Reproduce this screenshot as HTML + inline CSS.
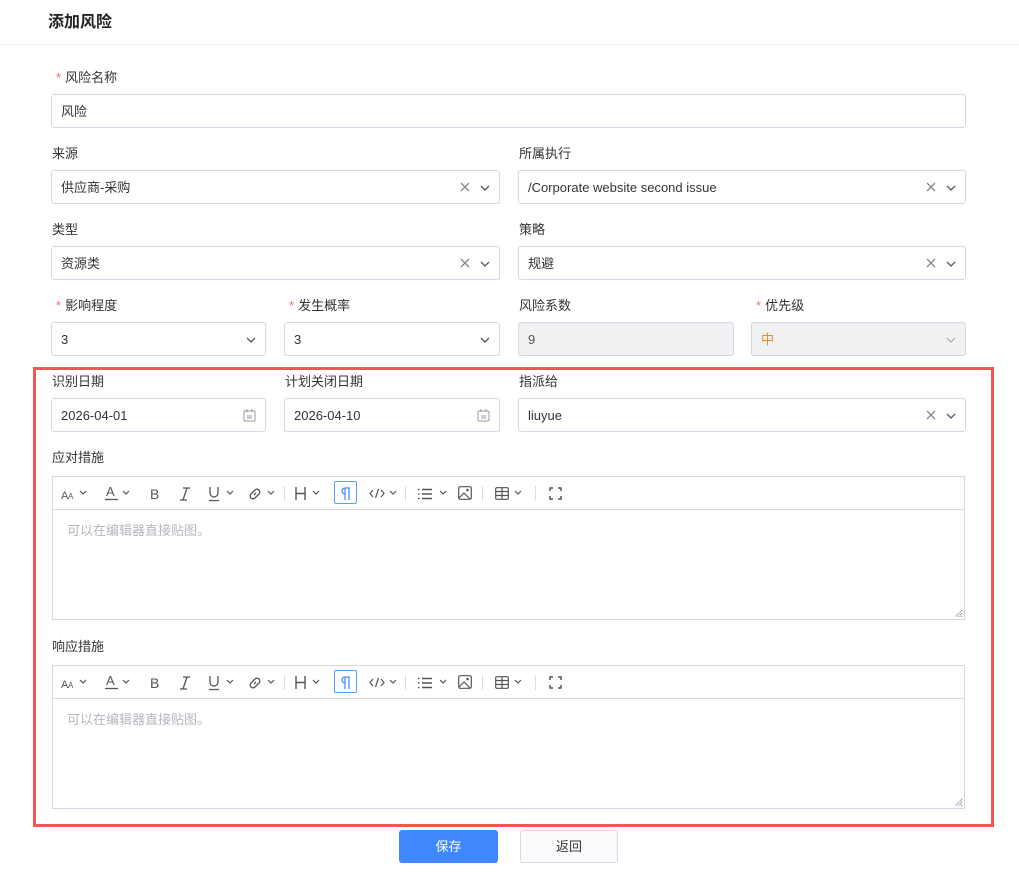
<!DOCTYPE html>
<html><head><meta charset="utf-8"><style>
*{box-sizing:border-box;margin:0;padding:0}
body{width:1019px;height:878px;background:#fff;position:relative;overflow:hidden;font-family:"Liberation Sans","Noto Sans CJK SC",sans-serif;color:#333;font-size:13px}
.a{position:absolute}
.lbl{position:absolute;font-size:13px;color:#333;line-height:16px}
.req{color:#f56c6c;margin-right:4px}
.in{position:absolute;height:34px;border:1px solid #d5d8e4;border-radius:3px;background:#fff;padding-left:9px;line-height:33px;font-size:13px;color:#333}
.dis{background:#f0f1f3}
.x{position:absolute;top:11px}
.chev{position:absolute;top:14px}
.ed{position:absolute;left:52px;width:913px;border:1px solid #d5d8e4;background:#fff}
.tb{height:33px;border-bottom:1px solid #d5d8e4;position:relative}
.tb svg{position:absolute}
.ph{position:absolute;left:14px;top:43px;color:#b4b7bf;font-size:13px}
.rs{position:absolute;right:1px;bottom:1px}
</style></head><body>
<div class="a" style="left:48px;top:8px;font-size:16px;font-weight:bold;color:#222">添加风险</div>
<div class="a" style="left:0;top:44px;width:1019px;height:1px;background:#eceef2"></div>

<div class="lbl" style="left:56px;top:70px"><span class="req">*</span>风险名称</div>
<div class="in" style="left:51px;top:94px;width:915px">风险</div>

<div class="lbl" style="left:52px;top:146px">来源</div>
<div class="in" style="left:51px;top:170px;width:449px">供应商-采购
<svg class="x" style="right:29px" width="10" height="10"><path d="M1 1l8 8M9 1l-8 8" stroke="#888" stroke-width="1.3"/></svg>
<svg class="chev" style="right:9px" width="10" height="6"><path d="M1 1l4 4 4-4" stroke="#555" fill="none" stroke-width="1.3"/></svg></div>
<div class="lbl" style="left:519px;top:146px">所属执行</div>
<div class="in" style="left:518px;top:170px;width:448px">/Corporate website second issue
<svg class="x" style="right:29px" width="10" height="10"><path d="M1 1l8 8M9 1l-8 8" stroke="#888" stroke-width="1.3"/></svg>
<svg class="chev" style="right:9px" width="10" height="6"><path d="M1 1l4 4 4-4" stroke="#555" fill="none" stroke-width="1.3"/></svg></div>

<div class="lbl" style="left:52px;top:222px">类型</div>
<div class="in" style="left:51px;top:246px;width:449px">资源类
<svg class="x" style="right:29px" width="10" height="10"><path d="M1 1l8 8M9 1l-8 8" stroke="#888" stroke-width="1.3"/></svg>
<svg class="chev" style="right:9px" width="10" height="6"><path d="M1 1l4 4 4-4" stroke="#555" fill="none" stroke-width="1.3"/></svg></div>
<div class="lbl" style="left:519px;top:222px">策略</div>
<div class="in" style="left:518px;top:246px;width:448px">规避
<svg class="x" style="right:29px" width="10" height="10"><path d="M1 1l8 8M9 1l-8 8" stroke="#888" stroke-width="1.3"/></svg>
<svg class="chev" style="right:9px" width="10" height="6"><path d="M1 1l4 4 4-4" stroke="#555" fill="none" stroke-width="1.3"/></svg></div>

<div class="lbl" style="left:56px;top:298px"><span class="req">*</span>影响程度</div>
<div class="in" style="left:51px;top:322px;width:215px">3
<svg class="chev" style="right:9px" width="10" height="6"><path d="M1 1l4 4 4-4" stroke="#555" fill="none" stroke-width="1.3"/></svg></div>
<div class="lbl" style="left:289px;top:298px"><span class="req">*</span>发生概率</div>
<div class="in" style="left:284px;top:322px;width:216px">3
<svg class="chev" style="right:9px" width="10" height="6"><path d="M1 1l4 4 4-4" stroke="#555" fill="none" stroke-width="1.3"/></svg></div>
<div class="lbl" style="left:519px;top:298px">风险系数</div>
<div class="in dis" style="left:518px;top:322px;width:216px;color:#555">9</div>
<div class="lbl" style="left:756px;top:298px"><span class="req">*</span>优先级</div>
<div class="in dis" style="left:751px;top:322px;width:215px;color:#f08a24">中
<svg class="chev" style="right:9px" width="10" height="6"><path d="M1 1l4 4 4-4" stroke="#aaa" fill="none" stroke-width="1.2"/></svg></div>

<div class="a" style="left:33px;top:367px;width:961px;height:460px;border:3px solid #f55454"></div>

<div class="lbl" style="left:52px;top:374px">识别日期</div>
<div class="in" style="left:51px;top:398px;width:215px">2026-04-01
<svg class="a" style="right:9px;top:10px" width="13" height="13"><rect x="1" y="2" width="11" height="10" rx="1" fill="none" stroke="#999"/><path d="M4 0v3M9 0v3M4 7h5M4 9h5" stroke="#999"/></svg></div>
<div class="lbl" style="left:285px;top:374px">计划关闭日期</div>
<div class="in" style="left:284px;top:398px;width:216px">2026-04-10
<svg class="a" style="right:9px;top:10px" width="13" height="13"><rect x="1" y="2" width="11" height="10" rx="1" fill="none" stroke="#999"/><path d="M4 0v3M9 0v3M4 7h5M4 9h5" stroke="#999"/></svg></div>
<div class="lbl" style="left:519px;top:374px">指派给</div>
<div class="in" style="left:518px;top:398px;width:448px">liuyue
<svg class="x" style="right:29px" width="10" height="10"><path d="M1 1l8 8M9 1l-8 8" stroke="#888" stroke-width="1.3"/></svg>
<svg class="chev" style="right:9px" width="10" height="6"><path d="M1 1l4 4 4-4" stroke="#555" fill="none" stroke-width="1.3"/></svg></div>

<div class="lbl" style="left:52px;top:450px">应对措施</div>
<div class="ed" style="top:476px;height:144px">
<div class="tb">
<svg style="left:8px;top:11px" width="14" height="12"><text x="0" y="11" font-size="11" fill="#555" font-family="Liberation Sans">A</text><text x="7" y="11" font-size="8" fill="#555" font-family="Liberation Sans">A</text></svg>
<svg style="left:26px;top:13px" width="8" height="5"><path d="M1 1l3 3 3-3" stroke="#555" fill="none" stroke-width="1.2"/></svg>
<svg style="left:52px;top:8px" width="14" height="16"><text x="1" y="11" font-size="13" fill="#555" font-family="Liberation Sans">A</text><path d="M0 14.5h13" stroke="#555" stroke-width="1.3"/></svg>
<svg style="left:69px;top:13px" width="8" height="5"><path d="M1 1l3 3 3-3" stroke="#555" fill="none" stroke-width="1.2"/></svg>
<svg style="left:97px;top:10px" width="12" height="14"><text x="0" y="12" font-size="14" fill="#555" font-family="Liberation Sans">B</text></svg>
<svg style="left:126px;top:10px" width="12" height="14"><path d="M4 1h7M1 13h7M8 1L4 13" stroke="#555" stroke-width="1.3" fill="none"/></svg>
<svg style="left:155px;top:9px" width="12" height="16"><path d="M2 1v6a4 4 0 0 0 8 0V1M1 14.5h10" stroke="#555" stroke-width="1.3" fill="none"/></svg>
<svg style="left:173px;top:13px" width="8" height="5"><path d="M1 1l3 3 3-3" stroke="#555" fill="none" stroke-width="1.2"/></svg>
<svg style="left:195px;top:10px" width="14" height="14"><path d="M6 8l2-2M5 5l2-2a2.5 2.5 0 0 1 4 4l-2 2M9 9l-2 2a2.5 2.5 0 0 1-4-4l2-2" stroke="#555" stroke-width="1.3" fill="none"/></svg>
<svg style="left:214px;top:13px" width="8" height="5"><path d="M1 1l3 3 3-3" stroke="#555" fill="none" stroke-width="1.2"/></svg>
<div class="a" style="left:231px;top:9px;width:1px;height:15px;background:#ddd"></div>
<svg style="left:242px;top:10px" width="12" height="13"><path d="M1 0v13M10 0v13M1 6.5h9" stroke="#555" stroke-width="1.4"/></svg>
<svg style="left:259px;top:13px" width="8" height="5"><path d="M1 1l3 3 3-3" stroke="#555" fill="none" stroke-width="1.2"/></svg>
<div class="a" style="left:281px;top:4px;width:23px;height:23px;border:1px solid #5b9cf8;border-radius:2px"></div>
<svg style="left:287px;top:10px" width="12" height="13"><path d="M5 1v12M9 1v12M10 1H5a3 3 0 0 0 0 6h0" stroke="#4a8ef5" stroke-width="1.3" fill="none"/></svg>
<svg style="left:316px;top:10px" width="16" height="13"><path d="M4 3L1 6.5 4 10M12 3l3 3.5-3 3.5M9.5 2l-3 9" stroke="#555" stroke-width="1.2" fill="none"/></svg>
<svg style="left:336px;top:13px" width="8" height="5"><path d="M1 1l3 3 3-3" stroke="#555" fill="none" stroke-width="1.2"/></svg>
<div class="a" style="left:352px;top:9px;width:1px;height:15px;background:#ddd"></div>
<svg style="left:364px;top:11px" width="16" height="12"><path d="M1 1.5h1.5M1 6h1.5M1 10.5h1.5M5 1.5h10M5 6h10M5 10.5h10" stroke="#555" stroke-width="1.4"/></svg>
<svg style="left:386px;top:13px" width="8" height="5"><path d="M1 1l3 3 3-3" stroke="#555" fill="none" stroke-width="1.2"/></svg>
<svg style="left:405px;top:9px" width="14" height="14"><rect x="0.7" y="0.7" width="12.6" height="12.6" rx="1.5" fill="none" stroke="#555" stroke-width="1.2"/><circle cx="9.5" cy="4" r="1.3" fill="#555"/><path d="M1 12l5-5 6 6" stroke="#555" stroke-width="1.2" fill="none"/></svg>
<div class="a" style="left:429px;top:9px;width:1px;height:15px;background:#ddd"></div>
<svg style="left:442px;top:10px" width="14" height="13"><rect x="0.7" y="0.7" width="12.6" height="11.6" rx="1" fill="none" stroke="#555" stroke-width="1.2"/><path d="M1 4.5h12M1 8.5h12M7 1v11" stroke="#555" stroke-width="1.2"/></svg>
<svg style="left:461px;top:13px" width="8" height="5"><path d="M1 1l3 3 3-3" stroke="#555" fill="none" stroke-width="1.2"/></svg>
<div class="a" style="left:482px;top:9px;width:1px;height:15px;background:#ddd"></div>
<svg style="left:496px;top:10px" width="13" height="13"><path d="M1 4V1h3M9 1h3v3M12 9v3H9M4 12H1V9" stroke="#555" stroke-width="1.5" fill="none"/></svg>
</div>
<div class="ph">可以在编辑器直接贴图。</div>
<svg class="rs" width="9" height="9"><path d="M8 1L1 8M8 4L4 8M8 7L7 8" stroke="#666" stroke-width="1" stroke-dasharray="1 1"/></svg>
</div>

<div class="lbl" style="left:52px;top:639px">响应措施</div>
<div class="ed" style="top:665px;height:144px">
<div class="tb">
<svg style="left:8px;top:11px" width="14" height="12"><text x="0" y="11" font-size="11" fill="#555" font-family="Liberation Sans">A</text><text x="7" y="11" font-size="8" fill="#555" font-family="Liberation Sans">A</text></svg>
<svg style="left:26px;top:13px" width="8" height="5"><path d="M1 1l3 3 3-3" stroke="#555" fill="none" stroke-width="1.2"/></svg>
<svg style="left:52px;top:8px" width="14" height="16"><text x="1" y="11" font-size="13" fill="#555" font-family="Liberation Sans">A</text><path d="M0 14.5h13" stroke="#555" stroke-width="1.3"/></svg>
<svg style="left:69px;top:13px" width="8" height="5"><path d="M1 1l3 3 3-3" stroke="#555" fill="none" stroke-width="1.2"/></svg>
<svg style="left:97px;top:10px" width="12" height="14"><text x="0" y="12" font-size="14" fill="#555" font-family="Liberation Sans">B</text></svg>
<svg style="left:126px;top:10px" width="12" height="14"><path d="M4 1h7M1 13h7M8 1L4 13" stroke="#555" stroke-width="1.3" fill="none"/></svg>
<svg style="left:155px;top:9px" width="12" height="16"><path d="M2 1v6a4 4 0 0 0 8 0V1M1 14.5h10" stroke="#555" stroke-width="1.3" fill="none"/></svg>
<svg style="left:173px;top:13px" width="8" height="5"><path d="M1 1l3 3 3-3" stroke="#555" fill="none" stroke-width="1.2"/></svg>
<svg style="left:195px;top:10px" width="14" height="14"><path d="M6 8l2-2M5 5l2-2a2.5 2.5 0 0 1 4 4l-2 2M9 9l-2 2a2.5 2.5 0 0 1-4-4l2-2" stroke="#555" stroke-width="1.3" fill="none"/></svg>
<svg style="left:214px;top:13px" width="8" height="5"><path d="M1 1l3 3 3-3" stroke="#555" fill="none" stroke-width="1.2"/></svg>
<div class="a" style="left:231px;top:9px;width:1px;height:15px;background:#ddd"></div>
<svg style="left:242px;top:10px" width="12" height="13"><path d="M1 0v13M10 0v13M1 6.5h9" stroke="#555" stroke-width="1.4"/></svg>
<svg style="left:259px;top:13px" width="8" height="5"><path d="M1 1l3 3 3-3" stroke="#555" fill="none" stroke-width="1.2"/></svg>
<div class="a" style="left:281px;top:4px;width:23px;height:23px;border:1px solid #5b9cf8;border-radius:2px"></div>
<svg style="left:287px;top:10px" width="12" height="13"><path d="M5 1v12M9 1v12M10 1H5a3 3 0 0 0 0 6h0" stroke="#4a8ef5" stroke-width="1.3" fill="none"/></svg>
<svg style="left:316px;top:10px" width="16" height="13"><path d="M4 3L1 6.5 4 10M12 3l3 3.5-3 3.5M9.5 2l-3 9" stroke="#555" stroke-width="1.2" fill="none"/></svg>
<svg style="left:336px;top:13px" width="8" height="5"><path d="M1 1l3 3 3-3" stroke="#555" fill="none" stroke-width="1.2"/></svg>
<div class="a" style="left:352px;top:9px;width:1px;height:15px;background:#ddd"></div>
<svg style="left:364px;top:11px" width="16" height="12"><path d="M1 1.5h1.5M1 6h1.5M1 10.5h1.5M5 1.5h10M5 6h10M5 10.5h10" stroke="#555" stroke-width="1.4"/></svg>
<svg style="left:386px;top:13px" width="8" height="5"><path d="M1 1l3 3 3-3" stroke="#555" fill="none" stroke-width="1.2"/></svg>
<svg style="left:405px;top:9px" width="14" height="14"><rect x="0.7" y="0.7" width="12.6" height="12.6" rx="1.5" fill="none" stroke="#555" stroke-width="1.2"/><circle cx="9.5" cy="4" r="1.3" fill="#555"/><path d="M1 12l5-5 6 6" stroke="#555" stroke-width="1.2" fill="none"/></svg>
<div class="a" style="left:429px;top:9px;width:1px;height:15px;background:#ddd"></div>
<svg style="left:442px;top:10px" width="14" height="13"><rect x="0.7" y="0.7" width="12.6" height="11.6" rx="1" fill="none" stroke="#555" stroke-width="1.2"/><path d="M1 4.5h12M1 8.5h12M7 1v11" stroke="#555" stroke-width="1.2"/></svg>
<svg style="left:461px;top:13px" width="8" height="5"><path d="M1 1l3 3 3-3" stroke="#555" fill="none" stroke-width="1.2"/></svg>
<div class="a" style="left:482px;top:9px;width:1px;height:15px;background:#ddd"></div>
<svg style="left:496px;top:10px" width="13" height="13"><path d="M1 4V1h3M9 1h3v3M12 9v3H9M4 12H1V9" stroke="#555" stroke-width="1.5" fill="none"/></svg>
</div>
<div class="ph">可以在编辑器直接贴图。</div>
<svg class="rs" width="9" height="9"><path d="M8 1L1 8M8 4L4 8M8 7L7 8" stroke="#666" stroke-width="1" stroke-dasharray="1 1"/></svg>
</div>

<div class="a" style="left:399px;top:830px;width:99px;height:33px;background:#3e88fb;border-radius:3px;color:#fff;text-align:center;line-height:33px;font-size:13px">保存</div>
<div class="a" style="left:520px;top:830px;width:98px;height:33px;background:#fafbfd;border:1px solid #d5d8e4;border-radius:3px;color:#333;text-align:center;line-height:31px;font-size:13px">返回</div>
</body></html>
